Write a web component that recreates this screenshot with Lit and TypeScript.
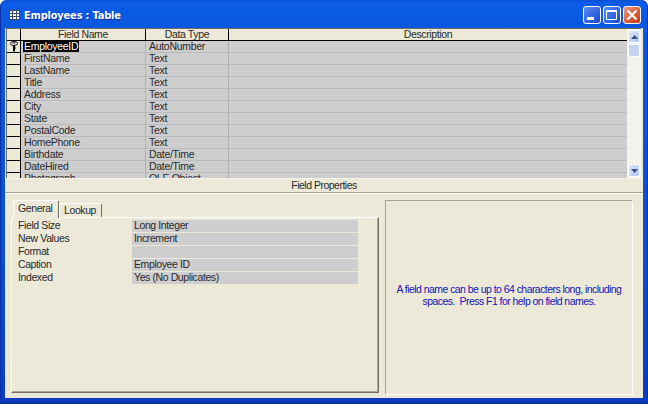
import { LitElement, html, css, svg } from "lit";
import { customElement } from "lit/decorators.js";

const rows: [string, string][] = [
  ["EmployeeID", "AutoNumber"], ["FirstName", "Text"], ["LastName", "Text"], ["Title", "Text"],
  ["Address", "Text"], ["City", "Text"], ["State", "Text"], ["PostalCode", "Text"],
  ["HomePhone", "Text"], ["Birthdate", "Date/Time"], ["DateHired", "Date/Time"], ["Photograph", "OLE Object"],
];
const props: [string, string][] = [
  ["Field Size", "Long Integer"], ["New Values", "Increment"], ["Format", ""],
  ["Caption", "Employee ID"], ["Indexed", "Yes (No Duplicates)"],
];

@customElement("app-root")
export class AppRoot extends LitElement {
  static styles = css`
    :host { display: block; width: 648px; height: 404px; font: 10.5px/12px "Liberation Sans", Arial, sans-serif; letter-spacing: -0.3px; color: #2a2a2a; overflow: hidden; }
    .win { width: 648px; height: 404px; box-sizing: border-box; display: flex; flex-direction: column; border-radius: 7px 7px 0 0; padding: 0 5px 6px 5px;
      background: linear-gradient(#0a50d8, #0a5ce6 3px, #0a58e0 24px, #0a4fd4 60%, #0a3cc0); box-shadow: inset 1px 0 0 #0831a8, inset -1px 0 0 #0831a8, inset 0 -2px 0 #0a2f9c; }
    .title { height: 28px; box-sizing: border-box; flex: none; display: flex; align-items: center; gap: 4px; padding: 2px 2px 0 4px; color: #fff; font: bold 11px "DejaVu Sans Condensed", "DejaVu Sans", sans-serif; letter-spacing: -0.2px; text-shadow: 1px 1px 0 #0a2f9c; }
    .title .name { flex: 1; }
    .btns { display: flex; gap: 2px; }
    .btn { width: 18px; height: 18px; box-sizing: border-box; border: 1px solid #fff; border-radius: 3px; background: linear-gradient(135deg, #5a8df0, #2a5ce0 70%, #1c46c8); display: block; }
    .btn svg { display: block; }
    .btn.close { background: linear-gradient(135deg, #ea9a80, #dc5a36 60%, #c0381a); }
    .body { flex: 1; display: flex; flex-direction: column; background: #ece9d8; min-height: 0; }
    .top { height: 150px; flex: none; box-sizing: border-box; display: flex; background: #cecece; border-top: 1px solid #6f6d62; border-left: 1px solid #6f6d62; margin: 0 2px 0 1px; }
    .grid { flex: 1; min-width: 0; display: flex; flex-direction: column; overflow: hidden; }
    .row { display: grid; grid-template-columns: 14px 125px 83px 1fr; height: 12px; flex: none; }
    .row > div { box-sizing: border-box; height: 12px; border-right: 1px solid #b0b0b0; border-bottom: 1px solid #bababa; padding-left: 3px; white-space: nowrap; overflow: hidden; line-height: 11px; }
    .head > div { background: #ece9d8; border-right: 1px solid #000; border-bottom: 1px solid #000; text-align: center; padding: 0; letter-spacing: -0.38px; }
    .row > .sel { background: #ece9d8; border-right: 1px solid #000; border-bottom: 1px solid #000; padding: 0; display: flex; align-items: center; justify-content: center; }
    .row > .desc, .head > .desc { border-right: 0; }
    .hl { background: #000; color: #fff; margin-left: -1px; padding: 0 1px; display: inline-block; height: 11px; }
    .sb { width: 14px; flex: none; display: flex; flex-direction: column; gap: 1px; background: #f4f3ec; padding: 1px; box-sizing: border-box; }
    .sb .arr { height: 13px; flex: none; box-sizing: border-box; border: 1px solid #fff; border-radius: 2px; background: linear-gradient(135deg, #dde6fb, #b4c8f2); display: flex; align-items: center; justify-content: center; }
    .sb .thumb { height: 13px; flex: none; box-sizing: border-box; border: 1px solid #fff; border-radius: 2px; background: #c4d2f4; }
    .sb .sp { flex: 1; }
    .fp { height: 15px; flex: none; box-sizing: border-box; text-align: center; line-height: 13px; border-top: 1px solid #f6f4ea; border-bottom: 1px solid #a5a391; letter-spacing: -0.5px; }
    .bottom { flex: 1; display: flex; gap: 6px; padding: 6px 10px 3px 6px; min-height: 0; border-top: 1px solid #fff; }
    .left { width: 368px; flex: none; display: flex; flex-direction: column; margin-bottom: 2px; }
    .tabs { display: flex; height: 17px; flex: none; padding-left: 2px; align-items: flex-start; }
    .tab { box-sizing: border-box; border: 1px solid #fff; border-bottom: 0; border-right: 1px solid #716f64; border-radius: 2px 2px 0 0; letter-spacing: -0.4px; }
    .tab.on { width: 46px; height: 18px; padding-left: 4px; line-height: 15px; position: relative; z-index: 1; background: #ece9d8; }
    .tab.off { width: 43px; height: 14px; margin-top: 3px; padding-left: 4px; line-height: 13px; }
    .panel { flex: 1; border: 1px solid #fff; border-right: 1px solid #716f64; border-bottom: 1px solid #716f64; box-shadow: inset -1px -1px 0 #aca899; padding: 2px 0 0 6px; }
    .prop { display: grid; grid-template-columns: 114px 226px; height: 13px; line-height: 11px; letter-spacing: -0.4px; }
    .prop .v { background: #cecece; padding-left: 2px; height: 12px; }
    .help { flex: 1; border: 1px solid #a5a391; border-right-color: #fff; border-bottom-color: #fff; display: flex; align-items: center; justify-content: center; text-align: center; color: #1414b4; padding: 0 0 5px; letter-spacing: -0.55px; white-space: nowrap; }
  `;

  private key() {
    return svg`<svg width="8" height="11" viewBox="0 0 8 11"><ellipse cx="4" cy="2.5" rx="3.5" ry="2" fill="#fff" stroke="#000"/><path d="M2.5 2h3" stroke="#000"/><path d="M3.5 4.5v5.5h1.5M4.5 4.5v5.5M5 7h1" fill="none" stroke="#000"/></svg>`;
  }

  render() {
    return html`<div class="win">
      <div class="title">
        <svg width="11" height="10" viewBox="0 0 11 10"><rect width="11" height="10" fill="#fff"/><path d="M0 .5h11M0 3.5h11M0 6.5h11M0 9.5h11M.5 0v10M3.5 0v10M7.5 0v10M10.5 0v10" stroke="#3c4a68"/></svg>
        <span class="name">Employees : Table</span>
        <div class="btns">
          <span class="btn"><svg width="16" height="16" viewBox="0 0 16 16"><rect x="3" y="10" width="7" height="3" fill="#fff"/></svg></span>
          <span class="btn"><svg width="16" height="16" viewBox="0 0 16 16"><path d="M2.5 3.5h10v9h-10z" fill="none" stroke="#fff"/><path d="M3 4h10" stroke="#fff" stroke-width="2"/></svg></span>
          <span class="btn close"><svg width="16" height="16" viewBox="0 0 16 16"><path d="M3.5 3.5l9 9M12.5 3.5l-9 9" stroke="#fff" stroke-width="2"/></svg></span>
        </div>
      </div>
      <div class="body">
        <div class="top">
          <div class="grid">
            <div class="row head"><div></div><div>Field Name</div><div>Data Type</div><div class="desc">Description</div></div>
            ${rows.map((r, i) => html`<div class="row">
              <div class="sel">${i === 0 ? this.key() : ""}</div>
              <div>${i === 0 ? html`<span class="hl">${r[0]}</span>` : r[0]}</div>
              <div>${r[1]}</div><div class="desc"></div>
            </div>`)}
          </div>
          <div class="sb">
            <span class="arr"><svg width="7" height="4" viewBox="0 0 7 4"><path d="M0 4L3.5 0 7 4z" fill="#3a4f8a"/></svg></span>
            <span class="thumb"></span><span class="sp"></span>
            <span class="arr"><svg width="7" height="4" viewBox="0 0 7 4"><path d="M0 0l3.5 4L7 0z" fill="#3a4f8a"/></svg></span>
          </div>
        </div>
        <div class="fp">Field Properties</div>
        <div class="bottom">
          <div class="left">
            <div class="tabs"><div class="tab on">General</div><div class="tab off">Lookup</div></div>
            <div class="panel">${props.map(p => html`<div class="prop"><span>${p[0]}</span><span class="v">${p[1]}</span></div>`)}</div>
          </div>
          <div class="help"><span>A field name can be up to 64 characters long, including<br>spaces.&nbsp; Press F1 for help on field names.</span></div>
        </div>
      </div>
    </div>`;
  }
}
